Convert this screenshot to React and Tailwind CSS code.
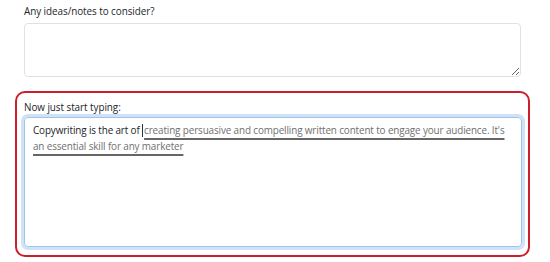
export default function App() {
  return (
    <div className="w-[550px] h-[262px] bg-white overflow-hidden text-[#212529]" style={{ fontFamily: '"Open Sans", Lato, sans-serif' }}>
      <div className="pl-[24px] pr-[29px] pt-[4px]">
        <div className="text-[9.9px] leading-[15px] tracking-[-0.05px]">Any ideas/notes to consider?</div>
        <textarea className="mt-[4px] block w-[497px] h-[54px] border border-[#dee2e6] rounded-[4px] bg-white outline-none" />
      </div>
      <div className="mx-[15px] mt-[14px] w-[515px] h-[166px] border-2 border-[#cc1f2b] rounded-[10px] px-[7px] pt-[7px]">
        <div className="text-[9.9px] leading-[15px] tracking-[-0.05px]">Now just start typing:</div>
        <div className="mt-[2px] w-[498px] h-[130px] border border-[#9ec5ec] rounded-[4px] shadow-[0_0_0_3px_#cfe2f6] px-[8px] pt-[5px] text-[9.9px] leading-[15.5px] tracking-[-0.12px]">
          <span className="text-[#212529]">Copywriting is the art of </span>
          <span className="inline-block w-px h-[13px] bg-[#333] align-[-3px] mr-px"></span>
          <span className="text-[#6f6f6f] underline decoration-[#666] decoration-2 underline-offset-[4px]">creating persuasive and compelling written content to engage your audience. It's an essential skill for any marketer</span>
        </div>
      </div>
    </div>
  );
}
